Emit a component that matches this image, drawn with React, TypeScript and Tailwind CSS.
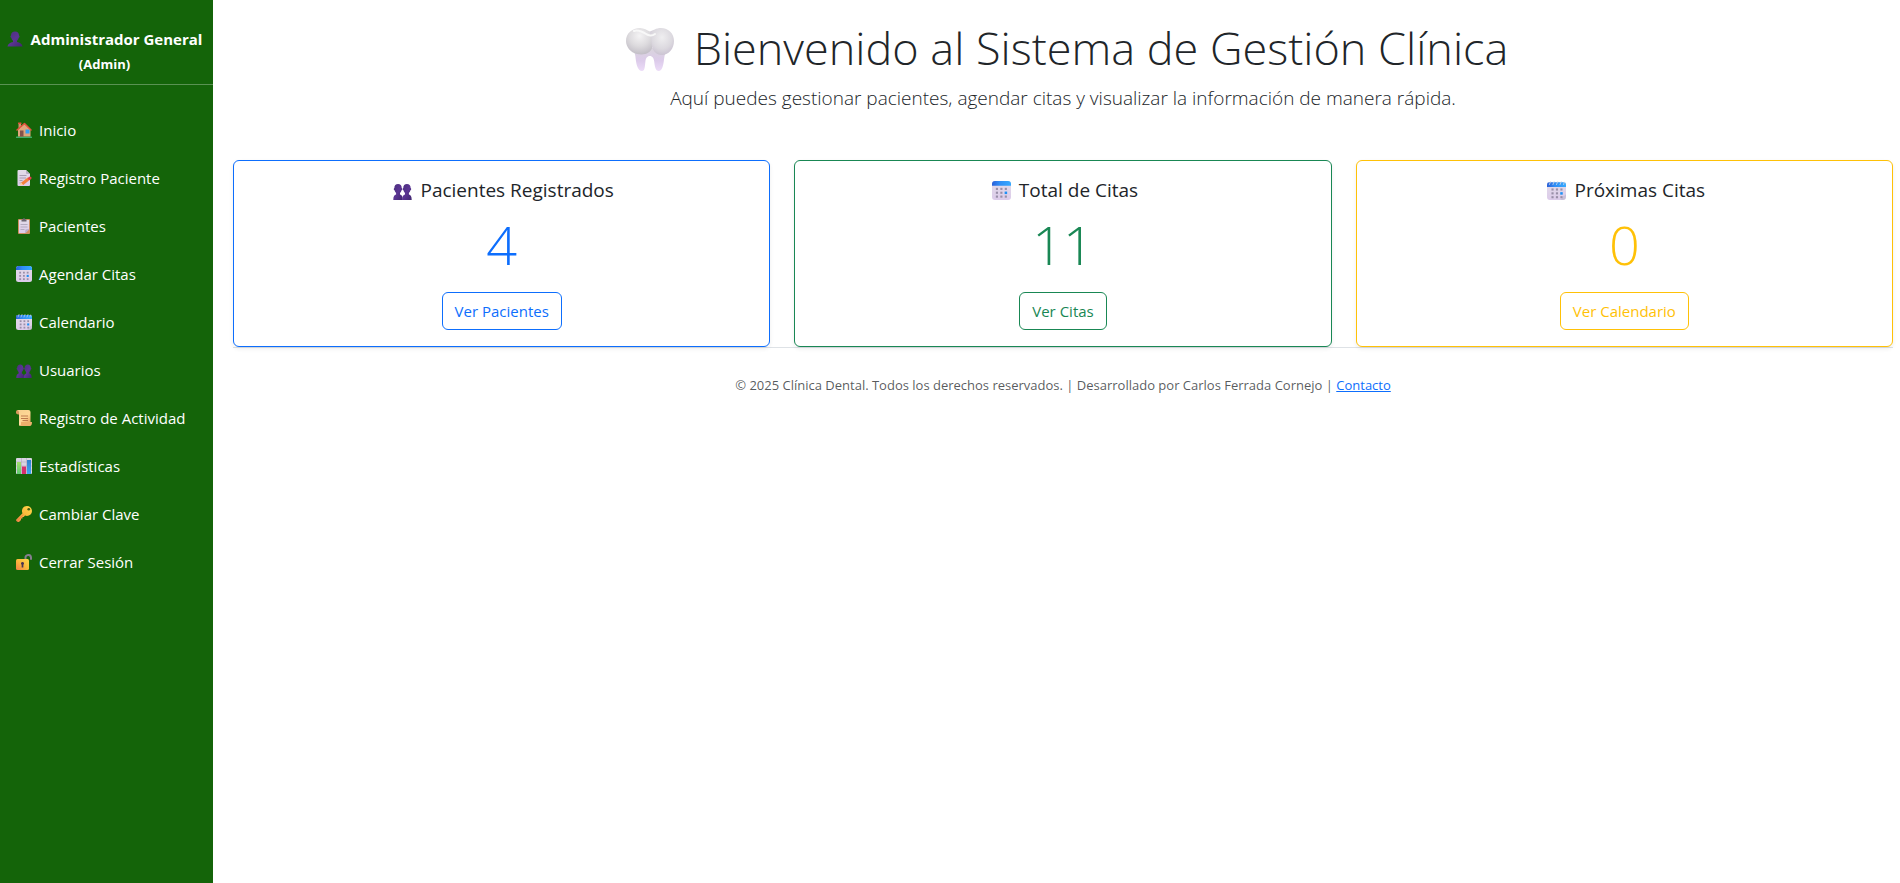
import type { ReactNode } from "react";

type IconProps = { className?: string };

function Svg({ className = "size-4", children }: { className?: string; children: ReactNode }) {
  return (
    <svg viewBox="0 0 32 32" aria-hidden="true" className={`shrink-0 ${className}`}>
      {children}
    </svg>
  );
}

/* Gradients shared by every icon on the page */
function Gradients() {
  return (
    <svg className="absolute size-0" aria-hidden="true">
      <defs>
        <linearGradient id="bust" x1="0" y1="0" x2="1" y2="1">
          <stop offset="0" stopColor="#4a2f7d" />
          <stop offset="0.5" stopColor="#5b3593" />
          <stop offset="1" stopColor="#40266f" />
        </linearGradient>
        <linearGradient id="page" x1="0" y1="0" x2="0" y2="1">
          <stop offset="0" stopColor="#e2dce8" />
          <stop offset="1" stopColor="#dccbea" />
        </linearGradient>
        <linearGradient id="calTop" x1="0" y1="0" x2="1" y2="0">
          <stop offset="0" stopColor="#2a5fd8" />
          <stop offset="0.4" stopColor="#2f8df5" />
          <stop offset="1" stopColor="#35aaff" />
        </linearGradient>
        <linearGradient id="gold" x1="1" y1="0" x2="0" y2="1">
          <stop offset="0" stopColor="#ffd84a" />
          <stop offset="0.5" stopColor="#fbb83c" />
          <stop offset="1" stopColor="#f08048" />
        </linearGradient>
        <linearGradient id="scroll" x1="0" y1="0" x2="1" y2="1">
          <stop offset="0" stopColor="#f5cf8e" />
          <stop offset="0.6" stopColor="#ffd795" />
          <stop offset="1" stopColor="#e9a765" />
        </linearGradient>
        <linearGradient id="toothRoot" x1="0" y1="0" x2="0" y2="1">
          <stop offset="0" stopColor="#d9d5dc" />
          <stop offset="0.55" stopColor="#dccbea" />
          <stop offset="1" stopColor="#ecdcf8" />
        </linearGradient>
        <radialGradient id="toothLeft" cx="0.5" cy="0.3" r="0.7">
          <stop offset="0" stopColor="#f4f3f4" />
          <stop offset="0.55" stopColor="#dddbde" />
          <stop offset="1" stopColor="#c2bec6" />
        </radialGradient>
        <radialGradient id="toothRight" cx="0.5" cy="0.35" r="0.7">
          <stop offset="0" stopColor="#efeef0" />
          <stop offset="0.6" stopColor="#dcd9df" />
          <stop offset="1" stopColor="#c8bfd0" />
        </radialGradient>
        <linearGradient id="green" x1="0" y1="0" x2="0" y2="1">
          <stop offset="0" stopColor="#a5dd6c" />
          <stop offset="1" stopColor="#5fca72" />
        </linearGradient>
        <linearGradient id="blue" x1="0" y1="0" x2="0" y2="1">
          <stop offset="0" stopColor="#2f7fd0" />
          <stop offset="1" stopColor="#3fa8f5" />
        </linearGradient>
      </defs>
    </svg>
  );
}

function BustIcon({ className }: IconProps) {
  return (
    <Svg className={className}>
      <path
        fill="url(#bust)"
        d="M16 1c5 0 8 3.200 8 8 1.600.4 1.600 4-.4 4.600-.6 2.600-1.800 4.600-3.600 5.800V22c5.600 1.200 10.500 3.400 11 9H1c.5-5.600 5.400-7.800 11-9v-2.600c-1.800-1.200-3-3.200-3.600-5.800-2-.6-2-4.200-.4-4.600 0-4.800 3-8 8-8z"
      />
    </Svg>
  );
}

function BustsIcon({ className }: IconProps) {
  const person =
    "M8.500 3c3.900 0 6.200 2.500 6.200 6.600 1.400.3 1.300 3.600-.3 4-.4 2.100-1.300 3.600-2.600 4.600v2.600c2.800.8 4.700 3 4.700 9.200H.500c0-6.200 1.900-8.400 4.700-9.200v-2.600c-1.300-1-2.200-2.500-2.600-4.600-1.600-.4-1.700-3.700-.3-4C2.300 5.500 4.600 3 8.500 3z";
  return (
    <Svg className={className}>
      <path fill="url(#bust)" transform="translate(0 2)" d={person} />
      <path fill="url(#bust)" transform="translate(15 2)" d={person} />
    </Svg>
  );
}

function HouseIcon() {
  return (
    <Svg>
      <rect x="0" y="29" width="32" height="3" rx="1" fill="#3fae6b" />
      <rect x="5" y="2" width="5" height="10" fill="#d0906c" />
      <rect x="4" y="1" width="7" height="3" rx="1" fill="#e0523a" />
      <path fill="#e0a67c" d="M4 15 17 4l12 11v14H4z" />
      <rect x="8" y="17" width="7" height="12" fill="#84524a" />
      <rect x="19" y="15" width="8" height="8" fill="#35a0f2" />
      <path d="M2 16 17 3l13 13" fill="none" stroke="#e5533d" strokeWidth="3" strokeLinecap="round" strokeLinejoin="round" />
    </Svg>
  );
}

function MemoIcon() {
  return (
    <Svg>
      <path fill="url(#page)" d="M5 0h15l8 8v22a2 2 0 0 1-2 2H5a2 2 0 0 1-2-2V2a2 2 0 0 1 2-2z" />
      <path fill="#b8aec4" d="M20 0l8 8h-6a2 2 0 0 1-2-2z" />
      <path stroke="#a79fb2" strokeWidth="2" d="M7 11h14M7 16h13M7 21h6M7 26h5" />
      <path stroke="#f5813f" strokeWidth="6" d="M12 28 26 17" />
      <path stroke="#e5404f" strokeWidth="6" strokeLinecap="round" d="m27 17 1-1" />
      <path fill="#ffcf96" d="m8 31 1.500-6.500 4.500 5z" />
    </Svg>
  );
}

function ClipboardIcon() {
  return (
    <Svg>
      <rect x="4" y="2" width="24" height="30" rx="2" fill="#cf8f62" />
      <path fill="url(#page)" d="M6 4h20v19l-7 7H6z" />
      <path fill="#b9adc9" d="M26 22v1l-7 7h-1l1-7z" />
      <path stroke="#b3abbf" strokeWidth="2" d="M9 13h14M9 18h14M9 23h8" />
      <path fill="#6d6672" d="M11 3h2.500a2.500 2.500 0 0 1 5 0H21v4H11z" />
    </Svg>
  );
}

function DateGrid() {
  return (
    <g fill="#998fa8">
      <rect x="6.500" y="11.500" width="3.600" height="3.600" />
      <rect x="14" y="11.500" width="3.600" height="3.600" />
      <rect x="21.500" y="11.500" width="3.600" height="3.600" />
      <rect x="6.500" y="18" width="3.600" height="3.600" />
      <rect x="14" y="18" width="3.600" height="3.600" />
      <rect x="21.300" y="17.800" width="4.200" height="4.200" fill="#1e90f5" />
      <rect x="6.500" y="24.500" width="3.600" height="3.600" />
      <rect x="14" y="24.500" width="3.600" height="3.600" />
      <rect x="21.500" y="24.500" width="3.600" height="3.600" />
    </g>
  );
}

function CalendarIcon({ className }: IconProps) {
  return (
    <Svg className={className}>
      <rect width="32" height="32" rx="5" fill="url(#page)" />
      <path fill="url(#calTop)" d="M0 8V5a5 5 0 0 1 5-5h22a5 5 0 0 1 5 5v3z" />
      <DateGrid />
    </Svg>
  );
}

function SpiralCalendarIcon({ className }: IconProps) {
  return (
    <Svg className={className}>
      <path fill="url(#page)" d="M0 6a4 4 0 0 1 4-4h24a4 4 0 0 1 4 4v17l-8 9H5a5 5 0 0 1-5-5z" />
      <path fill="#c9bfd8" d="M32 22v5a5 5 0 0 1-5 5h-6c4-1 4-3 4.500-6 2.500 0 5-1.500 6.500-4z" />
      <path fill="url(#calTop)" d="M0 10V6a4 4 0 0 1 4-4h24a4 4 0 0 1 4 4v4z" />
      <path stroke="#cfd6e4" strokeWidth="1.400" strokeLinecap="round" d="M4 6 6 1M10 6l2-5M16 6l2-5M22 6l2-5M28 6l1-4" />
      <g transform="translate(1 1)">
        <DateGrid />
      </g>
    </Svg>
  );
}

function ScrollIcon() {
  return (
    <Svg>
      <path fill="#d8985c" d="M3 0h6v9H5C1 9 0 7 0 4.500S1 0 3 0z" />
      <path fill="url(#scroll)" d="M3 0h22a4 4 0 0 1 4 4v20H6V6c0-3-1-5-3-6z" />
      <path fill="#edb06c" d="M9 24h23c0 5-1.500 8-4.500 8H10c-3 0-4-2-4-5v-4z" />
      <path fill="#ffdb9e" d="M6 20h4v7c0 3-1 4.500-2.500 4.500S6 30 6 27z" />
      <path stroke="#bd7a4e" strokeWidth="2" d="M10 12h14M10 17h14M13 21h11" />
    </Svg>
  );
}

function ChartIcon() {
  return (
    <Svg>
      <rect width="32" height="32" rx="2" fill="#d9d4e2" />
      <path stroke="#aaa3b8" strokeWidth="1" d="M0 8h32M0 16h32M0 24h32M11 0v32M21 0v32" />
      <rect x="2" y="8" width="8" height="24" fill="url(#green)" />
      <rect x="12" y="17" width="8" height="15" fill="#d62f6d" />
      <rect x="22" y="4" width="8" height="28" fill="url(#blue)" />
    </Svg>
  );
}

function KeyIcon() {
  return (
    <Svg>
      <path
        fill="url(#gold)"
        d="M22 0a10 10 0 0 1 0 20c-1.500 0-2.800-.3-4-.8L15.500 22H13v3h-3v3L6.500 31.300C4 33-.5 31 .2 27.500L13 14.500A10 10 0 0 1 22 0z"
      />
      <circle cx="25.500" cy="6.500" r="2.700" fill="#49600e" />
      <path stroke="#e87f42" strokeWidth="1.600" d="M3 28.500 15 17" />
    </Svg>
  );
}

function UnlockIcon() {
  return (
    <Svg>
      <path d="M19 12V8a5.500 5.500 0 0 1 11-1v3" fill="none" stroke="#857f8e" strokeWidth="4" strokeLinecap="round" />
      <rect x="0" y="10" width="26" height="22" rx="3" fill="url(#gold)" />
      <path fill="#4b3552" d="M13 16a3 3 0 0 1 1.700 5.500V27h-3.400v-5.500A3 3 0 0 1 13 16z" />
    </Svg>
  );
}

function ToothIcon() {
  return (
    <svg viewBox="0 0 48 44" aria-hidden="true" className="mt-1 h-11 w-12 shrink-0">
      <path
        fill="url(#toothRoot)"
        d="M6 20h36c-2.500 3-3.500 7-4 11.500-.6 6-2 11.500-5.200 11.500-3.500 0-4-5-4.600-9.500-.4-3.200-1.700-5.500-4.400-5.500s-4 2.300-4.400 5.500c-.6 4.500-.4 9.500-3.400 9.500-4 0-5.600-6-6.300-12C9.300 26.500 8.500 23 6 20z"
      />
      <path fill="url(#toothLeft)" d="M14 0c4 0 7 2.300 10 3.500 2 4 4 9 2.500 15C25 25.500 18 27.500 11 26 4.500 24.500 0 19 0 13 0 5.500 6 0 14 0z" />
      <path fill="url(#toothRight)" d="M35 0c7.500 0 13 5.500 13 13s-5 14-12 14-10.500-6-10.500-12.500C25.500 9 24 6 24 3.500 27 2.500 30 0 35 0z" />
      <path d="M8 3c4-2 9 1 13 3.500 3 1.500 6 1 8-.5" fill="none" stroke="#f8f8f8" strokeWidth="2" strokeLinecap="round" />
    </svg>
  );
}

const links: { label: string; icon: ReactNode }[] = [
  { label: "Inicio", icon: <HouseIcon /> },
  { label: "Registro Paciente", icon: <MemoIcon /> },
  { label: "Pacientes", icon: <ClipboardIcon /> },
  { label: "Agendar Citas", icon: <CalendarIcon /> },
  { label: "Calendario", icon: <SpiralCalendarIcon /> },
  { label: "Usuarios", icon: <BustsIcon /> },
  { label: "Registro de Actividad", icon: <ScrollIcon /> },
  { label: "Estadísticas", icon: <ChartIcon /> },
  { label: "Cambiar Clave", icon: <KeyIcon /> },
  { label: "Cerrar Sesión", icon: <UnlockIcon /> },
];

const cards = [
  {
    title: "Pacientes Registrados",
    value: 4,
    action: "Ver Pacientes",
    icon: <BustsIcon className="size-[19px]" />,
    border: "border-[#0d6efd]",
    text: "text-[#0d6efd]",
  },
  {
    title: "Total de Citas",
    value: 11,
    action: "Ver Citas",
    icon: <CalendarIcon className="size-[19px]" />,
    border: "border-[#198754]",
    text: "text-[#198754]",
  },
  {
    title: "Próximas Citas",
    value: 0,
    action: "Ver Calendario",
    icon: <SpiralCalendarIcon className="size-[19px]" />,
    border: "border-[#ffc107]",
    text: "text-[#ffc107]",
  },
];

export default function App() {
  return (
    <div className="flex min-h-screen bg-white font-['Open_Sans','Noto_Sans',sans-serif] text-[#212529]">
      <Gradients />
      <aside className="w-[213px] shrink-0 bg-[#146409] text-white">
        <header className="border-b border-white/30 pt-[26px] pr-1 pb-2 text-center font-bold">
          <div className="flex items-center justify-center gap-2 text-[15px] leading-[26px]">
            <BustIcon />
            Administrador General
          </div>
          <div className="text-[13px] leading-6">(Admin)</div>
        </header>
        <nav className="pt-[21px]">
          {links.map(({ label, icon }) => (
            <a key={label} href="#" className="flex items-center gap-[7px] px-4 py-3 text-[15px] leading-6">
              {icon}
              {label}
            </a>
          ))}
        </nav>
      </aside>

      <main className="min-w-0 flex-1 pt-5 pr-[7px] pl-5">
        <div className="text-center">
          <h1 className="flex items-center justify-center gap-5 pl-2 text-[45px] leading-[56px] font-light">
            <ToothIcon />
            Bienvenido al Sistema de Gestión Clínica
          </h1>
          <p className="mt-[7px] text-[19px] leading-[30px] font-light">
            Aquí puedes gestionar pacientes, agendar citas y visualizar la información de manera rápida.
          </p>
        </div>

        <section className="mt-[47px] grid grid-cols-3 gap-6">
          {cards.map((card) => (
            <article
              key={card.title}
              className={`flex flex-col items-center rounded-md border bg-white p-4 shadow-[0_2px_4px_rgba(0,0,0,0.075)] ${card.border}`}
            >
              <h2 className="flex items-center gap-2 pl-1 text-[19px] leading-[26px]">
                {card.icon}
                {card.title}
              </h2>
              <p className={`mt-2 text-[54px] leading-[67px] font-light ${card.text}`}>{card.value}</p>
              <a href="#" className={`mt-3.5 rounded-md border px-3 py-1.5 text-[15px] leading-6 ${card.border} ${card.text}`}>
                {card.action}
              </a>
            </article>
          ))}
        </section>

        <footer className="border-t border-[#dee2e6] pt-[25px] text-center text-[13px] leading-6 text-[#212529]/75">
          © 2025 Clínica Dental. Todos los derechos reservados. | Desarrollado por Carlos Ferrada Cornejo |{" "}
          <a href="#" className="text-[#0d6efd] underline">
            Contacto
          </a>
        </footer>
      </main>
    </div>
  );
}
